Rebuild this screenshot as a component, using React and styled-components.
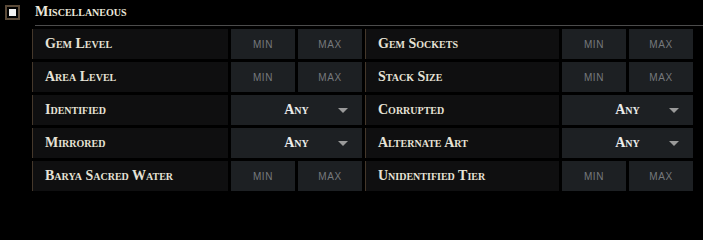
import React from "react";
import styled, { createGlobalStyle } from "styled-components";

const GlobalStyle = createGlobalStyle`
  html, body {
    margin: 0;
    padding: 0;
    background: #000;
  }
  body {
    font-family: "Liberation Serif", "DejaVu Serif", serif;
    color: #e4e0d4;
  }
`;

const filters = [
  { label: "Gem Level", type: "range" },
  { label: "Gem Sockets", type: "range" },
  { label: "Area Level", type: "range" },
  { label: "Stack Size", type: "range" },
  { label: "Identified", type: "select" },
  { label: "Corrupted", type: "select" },
  { label: "Mirrored", type: "select" },
  { label: "Alternate Art", type: "select" },
  { label: "Barya Sacred Water", type: "range" },
  { label: "Unidentified Tier", type: "range" },
];

const App = () => {
  return (
    <Panel>
      <GlobalStyle />
      <Header>
        <Toggle>
          <ToggleDot />
        </Toggle>
        <Title>Miscellaneous</Title>
      </Header>
      <Divider />
      <Grid>
        {filters.map((f) => (
          <Filter key={f.label}>
            <Label>{f.label}</Label>
            {f.type === "range" ? (
              <>
                <NumInput placeholder="min" />
                <NumInput placeholder="max" />
              </>
            ) : (
              <Select>
                <SelectText>Any</SelectText>
                <Arrow />
              </Select>
            )}
          </Filter>
        ))}
      </Grid>
    </Panel>
  );
};

const Panel = styled.div`
  width: 703px;
  height: 200px;
  background: #000;
`;

const Header = styled.div`
  display: flex;
  align-items: center;
  height: 25px;
  padding-left: 5px;
`;

const Toggle = styled.div`
  width: 11px;
  height: 11px;
  border: 2px solid #5b4a38;
  display: flex;
  align-items: center;
  justify-content: center;
  background: #000;
`;

const ToggleDot = styled.div`
  width: 7px;
  height: 7px;
  background: #f2f2f2;
`;

const Title = styled.div`
  margin-left: 15px;
  margin-top: -1px;
  font-size: 14px;
  font-weight: bold;
  font-variant: small-caps;
  color: #ece8dc;
`;

const Divider = styled.div`
  margin-left: 35px;
  height: 1px;
  background: #4c4c4c;
`;

const Grid = styled.div`
  display: grid;
  grid-template-columns: 330px 328px;
  column-gap: 3px;
  row-gap: 3px;
  margin: 3px 0 0 32px;
`;

const Filter = styled.div`
  display: flex;
  gap: 3px;
  height: 30px;
  border-left: 1px solid #45382b;
`;

const Label = styled.div`
  flex: 1;
  display: flex;
  align-items: center;
  padding-left: 12px;
  background: #0f0f10;
  font-size: 14px;
  font-weight: bold;
  font-variant: small-caps;
  color: #e6e2d6;
  white-space: nowrap;
`;

const NumInput = styled.input`
  width: 64px;
  height: 30px;
  box-sizing: border-box;
  border: none;
  outline: none;
  background: #1d2023;
  text-align: center;
  font-family: "Liberation Sans", Arial, sans-serif;
  font-size: 10px;
  text-transform: uppercase;
  letter-spacing: 0.6px;
  color: #d8d8d8;
  &::placeholder {
    color: #76797d;
    text-transform: uppercase;
  }
`;

const Select = styled.div`
  position: relative;
  width: 131px;
  height: 30px;
  background: #1d2023;
  display: flex;
  align-items: center;
  justify-content: center;
`;

const SelectText = styled.span`
  font-size: 14px;
  font-weight: bold;
  font-variant: small-caps;
  color: #ebebeb;
`;

const Arrow = styled.span`
  position: absolute;
  right: 14px;
  top: 13px;
  width: 0;
  height: 0;
  border-left: 5px solid transparent;
  border-right: 5px solid transparent;
  border-top: 5px solid #9a9a9a;
`;

export default App;
